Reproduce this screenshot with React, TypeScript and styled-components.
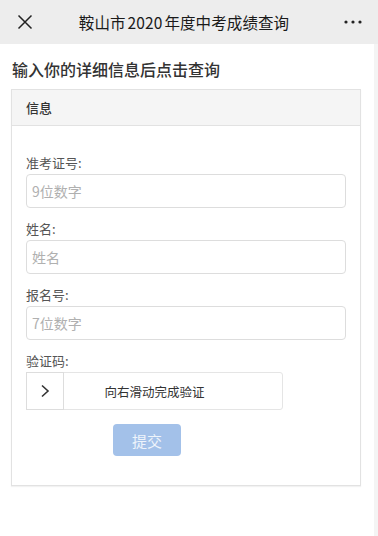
import React from "react";
import styled, { createGlobalStyle } from "styled-components";

const Global = createGlobalStyle`
  html, body { margin: 0; padding: 0; background: #fff; }
  body { font-family: "Noto Sans CJK SC", "Noto Sans", sans-serif; }
  * { box-sizing: border-box; }
`;

const Page = styled.div`
  width: 378px;
  height: 536px;
  display: flex;
  flex-direction: column;
  overflow: hidden;
`;

const TopBar = styled.div`
  height: 44px;
  background: #ededed;
  display: flex;
  align-items: center;
  padding: 0 16px 0 16px;
`;

const IconBtn = styled.div`
  width: 18px;
  height: 18px;
  display: flex;
  align-items: center;
  justify-content: center;
  color: #222;
`;

const Title = styled.div`
  flex: 1;
  text-align: center;
  font-size: 15.5px;
  color: #1a1a1a;
  letter-spacing: 0.1px;
  margin-right: 10px;
`;

const Num = styled.span`
  margin: 0 2px;
`;

const Main = styled.div`
  flex: 1;
  display: flex;
`;

const Content = styled.div`
  flex: 1;
  padding: 0 13px 0 11px;
`;

const Track = styled.div`
  width: 4px;
  background: #f4f4f4;
`;

const Heading = styled.h1`
  margin: 0;
  padding: 13px 0 0 1px;
  height: 45px;
  font-size: 16px;
  line-height: 24px;
  font-weight: 500;
  color: #333;
`;

const Panel = styled.div`
  border: 1px solid #e2e2e2;
  box-shadow: 0 1px 1px rgba(0, 0, 0, 0.05);
`;

const PanelHead = styled.div`
  height: 36px;
  background: #f5f5f5;
  border-bottom: 1px solid #e2e2e2;
  padding: 0 14px;
  display: flex;
  align-items: center;
  font-size: 13px;
  font-weight: 500;
  color: #333;
`;

const PanelBody = styled.div`
  padding: 28px 14px 29px 14px;
`;

const Group = styled.div`
  margin-bottom: 12px;
`;

const Label = styled.div`
  font-size: 13px;
  line-height: 18px;
  color: #555;
  margin-bottom: 2px;
`;

const Input = styled.input`
  display: block;
  width: 320px;
  height: 34px;
  border: 1px solid #ddd;
  border-radius: 4px;
  padding: 0 5px;
  font-size: 14px;
  font-family: inherit;
  color: #333;
  outline: none;
  &::placeholder { color: #b0b0b0; }
`;

const Slider = styled.div`
  position: relative;
  width: 257px;
  height: 38px;
  border: 1px solid #e5e5e5;
  border-radius: 3px;
  display: flex;
  align-items: center;
  justify-content: center;
  font-size: 12.5px;
  color: #333;
`;

const Handle = styled.div`
  position: absolute;
  left: -1px;
  top: -1px;
  width: 38px;
  height: 38px;
  border: 1px solid #ddd;
  background: #fff;
  display: flex;
  align-items: center;
  justify-content: center;
  color: #333;
`;

const Submit = styled.button`
  display: block;
  margin: 14px 0 0 87px;
  width: 68px;
  height: 32px;
  border: none;
  border-radius: 4px;
  background: #a3c1e9;
  color: #eef4fb;
  font-size: 15px;
  font-family: inherit;
`;

const fields = [
  { label: "准考证号:", placeholder: "9位数字" },
  { label: "姓名:", placeholder: "姓名" },
  { label: "报名号:", placeholder: "7位数字" },
];

export default function App() {
  return (
    <>
      <Global />
      <Page>
        <TopBar>
          <IconBtn>
            <svg width="16" height="16" viewBox="0 0 16 16" fill="none" stroke="#222" strokeWidth="1.5">
              <path d="M1.5 1.5 L14.5 14.5 M14.5 1.5 L1.5 14.5" />
            </svg>
          </IconBtn>
          <Title>
            鞍山市<Num>2020</Num>年度中考成绩查询
          </Title>
          <IconBtn>
            <svg width="18" height="4" viewBox="0 0 18 4" fill="#222">
              <circle cx="2" cy="2" r="1.6" />
              <circle cx="9" cy="2" r="1.6" />
              <circle cx="16" cy="2" r="1.6" />
            </svg>
          </IconBtn>
        </TopBar>
        <Main>
          <Content>
            <Heading>输入你的详细信息后点击查询</Heading>
            <Panel>
              <PanelHead>信息</PanelHead>
              <PanelBody>
                {fields.map((f) => (
                  <Group key={f.label}>
                    <Label>{f.label}</Label>
                    <Input placeholder={f.placeholder} />
                  </Group>
                ))}
                <Label>验证码:</Label>
                <Slider>
                  <Handle>
                    <svg width="10" height="14" viewBox="0 0 10 14" fill="none" stroke="#333" strokeWidth="1.6">
                      <path d="M2 1.5 L8 7 L2 12.5" />
                    </svg>
                  </Handle>
                  向右滑动完成验证
                </Slider>
                <Submit>提交</Submit>
              </PanelBody>
            </Panel>
          </Content>
          <Track />
        </Main>
      </Page>
    </>
  );
}
